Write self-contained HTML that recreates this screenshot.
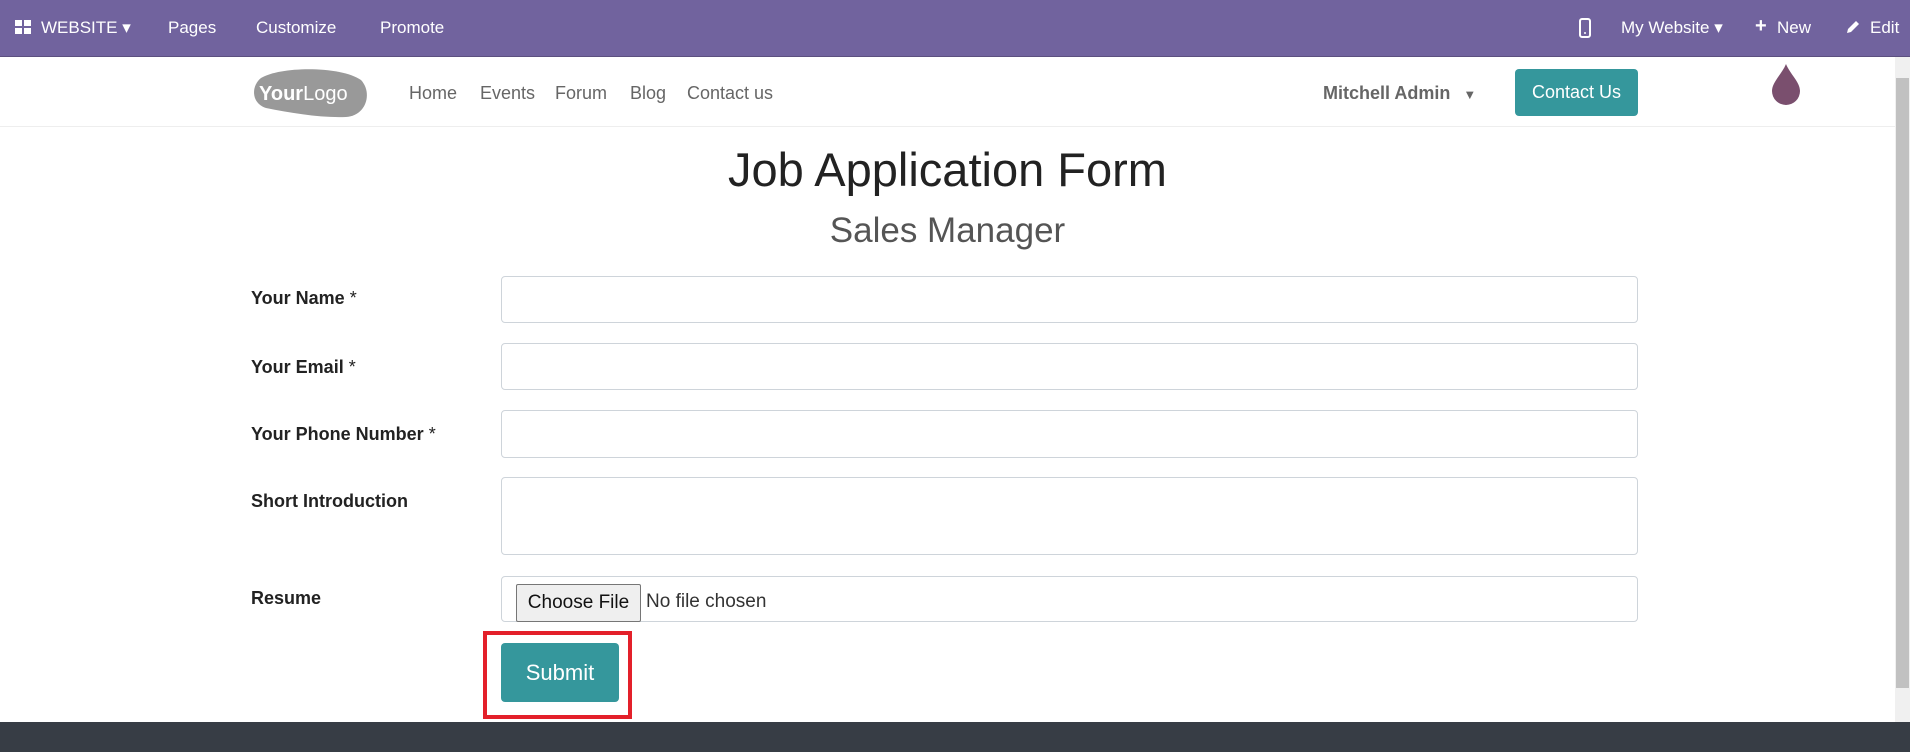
<!DOCTYPE html>
<html><head><style>
*{box-sizing:border-box;margin:0;padding:0}
body{width:1910px;height:752px;overflow:hidden;background:#fff;font-family:"Liberation Sans",sans-serif;position:relative}
.a{position:absolute}
.top{left:0;top:0;width:1910px;height:57px;background:#71639e;border-bottom:1px solid #5c507f;color:#fff;font-size:17px}
.top span{position:absolute;top:18px}
.hdr{left:0;top:57px;width:1895px;height:70px;background:#fff;border-bottom:1px solid #eee}
.nav{color:#666;font-size:18px;top:83px}
.lbl{left:251px;font-weight:bold;font-size:18px;color:#222}
.lbl i{font-style:normal;font-weight:normal}
.inp{left:501px;width:1137px;border:1px solid #ced4da;border-radius:4px;background:#fff}
</style></head><body>
<div class="a top">
<svg class="a" style="left:15px;top:20px" width="16" height="14"><rect x="0" y="0" width="7" height="6" fill="#fff"/><rect x="9" y="0" width="7" height="6" fill="#fff"/><rect x="0" y="8" width="7" height="6" fill="#fff"/><rect x="9" y="8" width="7" height="6" fill="#fff"/></svg>
<span style="left:41px">WEBSITE ▾</span>
<span style="left:168px">Pages</span>
<span style="left:256px">Customize</span>
<span style="left:380px">Promote</span>
<svg class="a" style="left:1579px;top:18px" width="12" height="20"><rect x="1" y="1" width="10" height="18" rx="2" fill="none" stroke="#fff" stroke-width="2"/><circle cx="6" cy="15" r="1" fill="#fff"/></svg>
<span style="left:1621px">My Website ▾</span>
<span style="left:1755px;font-weight:bold;font-size:20px;top:15px">+</span>
<span style="left:1777px">New</span>
<svg class="a" style="left:1845px;top:19px" width="16" height="16"><path d="M2 14 L3 10 L11 2 L14 5 L6 13 Z" fill="#fff"/></svg>
<span style="left:1870px">Edit</span>
</div>
<div class="a hdr"></div>
<svg class="a" style="left:251px;top:68px" width="119" height="50"><path d="M10 10 C30 -2 90 -2 110 12 C122 25 115 48 95 49 C70 50 40 45 15 40 C0 35 0 18 10 10Z" fill="#999"/><text x="8" y="32" font-family="Liberation Sans" font-size="20" fill="#fff"><tspan font-weight="bold">Your</tspan>Logo</text></svg>
<div class="a nav" style="left:409px">Home</div>
<div class="a nav" style="left:480px">Events</div>
<div class="a nav" style="left:555px">Forum</div>
<div class="a nav" style="left:630px">Blog</div>
<div class="a nav" style="left:687px">Contact us</div>
<div class="a" style="left:1323px;top:83px;font-size:18px;font-weight:bold;color:#666">Mitchell Admin <span style="font-size:13px;margin-left:8px">▼</span></div>
<div class="a" style="left:1515px;top:69px;width:123px;height:47px;background:#35979c;border-radius:4px;color:#fff;font-size:18px;text-align:center;line-height:47px">Contact Us</div>
<svg class="a" style="left:1772px;top:64px" width="28" height="41"><path d="M14 0 C10 10 0 18 0 27 A14 14 0 0 0 28 27 C28 18 18 10 14 0Z" fill="#7a4f6e"/></svg>
<div class="a" style="left:1895px;top:57px;width:15px;height:665px;background:#f0f0f0"></div>
<div class="a" style="left:1896px;top:78px;width:13px;height:610px;background:#c1c1c1"></div>
<div class="a" style="left:0;top:142px;width:1895px;text-align:center;font-size:47px;color:#222">Job Application Form</div>
<div class="a" style="left:0;top:211px;width:1895px;text-align:center;font-size:35px;color:#555">Sales Manager</div>
<div class="a lbl" style="top:288px">Your Name <i>*</i></div>
<div class="a lbl" style="top:357px">Your Email <i>*</i></div>
<div class="a lbl" style="top:424px">Your Phone Number <i>*</i></div>
<div class="a lbl" style="top:491px">Short Introduction</div>
<div class="a lbl" style="top:588px">Resume</div>
<div class="a inp" style="top:276px;height:47px"></div>
<div class="a inp" style="top:343px;height:47px"></div>
<div class="a inp" style="top:410px;height:48px"></div>
<div class="a inp" style="top:477px;height:78px"></div>
<div class="a inp" style="top:576px;height:46px"></div>
<div class="a" style="left:516px;top:584px;width:125px;height:38px;background:#efefef;border:1px solid #767676;border-radius:2px;font-size:19px;text-align:center;line-height:36px;color:#111">Choose File</div>
<div class="a" style="left:646px;top:591px;font-size:19px;color:#333">No file chosen</div>
<div class="a" style="left:483px;top:631px;width:149px;height:88px;border:4px solid #e3202a"></div>
<div class="a" style="left:501px;top:643px;width:118px;height:59px;background:#35979c;border-radius:4px;color:#fff;font-size:22px;text-align:center;line-height:59px">Submit</div>
<div class="a" style="left:0;top:722px;width:1910px;height:30px;background:#373d45"></div>
</body></html>
